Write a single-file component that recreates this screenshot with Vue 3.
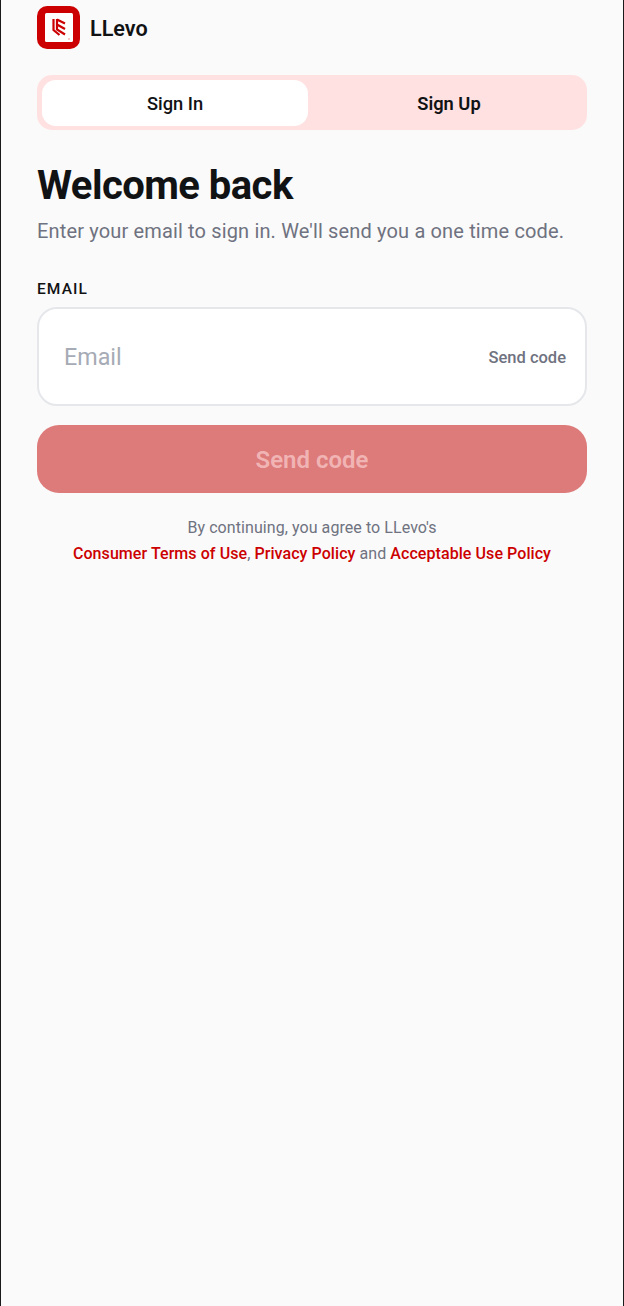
<template>
  <div class="screen">
    <header class="brand">
      <svg class="logo" width="43" height="43" viewBox="0 0 43 43">
        <rect width="43" height="43" rx="10" fill="#cc0000" />
        <rect x="8" y="7" width="28" height="29" rx="1.5" fill="#fff" />
        <path
          d="M16.500 13v11l6 5 M20 13v10.500l8 5 M20 13.500l8 4 M20 18.500l8 4.500"
          fill="none"
          stroke="#cc0000"
          stroke-width="2.200"
        />
        <circle cx="32" cy="33" r="0.8" fill="#e88" />
      </svg>
      <span class="brand-name">LLevo</span>
    </header>

    <div class="tabs">
      <button class="tab active">Sign In</button>
      <button class="tab">Sign Up</button>
    </div>

    <h1>Welcome back</h1>
    <p class="sub">Enter your email to sign in. We'll send you a one time code.</p>

    <label class="label">EMAIL</label>
    <div class="field">
      <span class="placeholder">Email</span>
      <span class="inline-send">Send code</span>
    </div>

    <button class="submit"><span>Send code</span></button>

    <p class="terms">
      By continuing, you agree to LLevo's<br />
      <a>Consumer Terms of Use</a>, <a>Privacy Policy</a> and <a>Acceptable Use Policy</a>
    </p>
  </div>
</template>

<script setup>
</script>

<style>
html,
body {
  margin: 0;
  background: #fafafa;
}
</style>

<style scoped>
.screen {
  box-sizing: border-box;
  height: 1306px;
  padding: 6px 36px 0 36px;
  background: #fafafa;
  border-left: 1px solid #1a1a1a;
  border-right: 1px solid #1a1a1a;
  font-family: Roboto, sans-serif;
  color: #111214;
}

.brand {
  display: flex;
  align-items: center;
  gap: 10px;
  height: 43px;
}

.logo {
  display: block;
}

.brand-name {
  padding-top: 2px;
  font-size: 21.600px;
  font-weight: 600;
}

.tabs {
  display: flex;
  box-sizing: border-box;
  height: 55px;
  margin-top: 26px;
  padding: 5px 0 5px 5px;
  background: #ffe1e1;
  border-radius: 15px;
}

.tab {
  flex: 1;
  height: 46px;
  padding: 0 0 0 3px;
  border: 0;
  border-radius: 14px;
  background: transparent;
  font: 600 18.300px Roboto, sans-serif;
  color: #111214;
}

.tab.active {
  flex: 0 0 266px;
  padding: 0;
  background: #fff;
  font-weight: 500;
}

h1 {
  margin: 32px 0 0;
  font-size: 40px;
  line-height: 48px;
  font-weight: 700;
  letter-spacing: -0.55px;
}

.sub {
  margin: 7px 0 0;
  font-size: 20px;
  line-height: 28px;
  letter-spacing: 0.15px;
  color: #6f7280;
}

.label {
  display: block;
  margin-top: 34px;
  font-size: 15.500px;
  line-height: 20px;
  font-weight: 500;
  letter-spacing: 1.100px;
}

.field {
  display: flex;
  align-items: center;
  justify-content: space-between;
  box-sizing: border-box;
  height: 99px;
  margin-top: 8px;
  padding: 0 19px 0 25px;
  background: #fff;
  border: 2px solid #e5e7eb;
  border-radius: 20px;
}

.placeholder {
  font-size: 23.300px;
  color: #a6abb5;
}

.inline-send {
  position: relative;
  top: 1px;
  font-size: 16.500px;
  font-weight: 500;
  color: #6f7280;
}

.submit {
  display: block;
  width: 100%;
  height: 68px;
  margin-top: 19px;
  padding: 2px 0 0;
  border: 0;
  border-radius: 22px;
  background: #dd7a7a;
  font: 600 24px Roboto, sans-serif;
  color: #f1b4b4;
}

.terms {
  margin: 22px 0 0;
  text-align: center;
  font-size: 16px;
  line-height: 26px;
  letter-spacing: 0.07px;
  color: #6f7280;
}

.terms a {
  color: #cc0000;
  font-weight: 500;
}
</style>
